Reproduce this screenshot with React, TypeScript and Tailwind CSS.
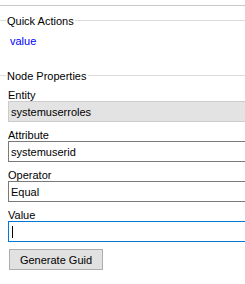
import React from "react";

const font = { fontFamily: '"Liberation Sans", Arial, sans-serif' };

function Legend({ title, top }: { title: string; top: string }) {
  return (
    <div className={`flex items-center h-[14px] ${top}`}>
      <div className="w-[6px] h-px bg-[#dcdcdc]" />
      <span className="px-[1px] text-[11px] leading-[14px] pt-px text-black whitespace-nowrap">{title}</span>
      <div className="flex-1 h-px bg-[#dcdcdc]" />
    </div>
  );
}

function Field({
  label,
  value,
  variant,
}: {
  label: string;
  value?: string;
  variant: "disabled" | "normal" | "focus";
}) {
  const box =
    variant === "disabled"
      ? "bg-[#e3e3e3] border-[#cccccc]"
      : variant === "focus"
      ? "bg-white border-[#0078d7]"
      : "bg-white border-[#7a7a7a]";
  return (
    <div className="flex flex-col">
      <div className="h-[14px] leading-[14px] pt-px text-[11px] text-black pl-[8px]">{label}</div>
      <div className={`ml-[8px] w-[260px] h-[21px] border flex items-center pl-[2px] text-[11px] text-black ${box}`}>
        {variant === "focus" ? (
          <div className="ml-[1px] w-px h-[12px] bg-black" />
        ) : (
          <span className="leading-[14px]">{value}</span>
        )}
      </div>
    </div>
  );
}

export default function App() {
  return (
    <div className="w-[245px] h-[284px] bg-white overflow-hidden pt-[5px]" style={font}>
      <div className="h-px bg-[#c8c8c8]" />
      <Legend title="Quick Actions" top="mt-[7px]" />
      <div className="mt-[6px] pl-[10px] h-[14px] leading-[14px] pt-px text-[11px] text-[#0000ff]">value</div>
      <Legend title="Node Properties" top="mt-[21px]" />
      <div className="mt-[5px] flex flex-col gap-[5px]">
        <Field label="Entity" value="systemuserroles" variant="disabled" />
        <Field label="Attribute" value="systemuserid" variant="normal" />
        <Field label="Operator" value="Equal" variant="normal" />
        <Field label="Value" variant="focus" />
      </div>
      <div className="mt-[7px] pl-[9px]">
        <button className="w-[94px] h-[21px] bg-[#e1e1e1] border border-[#adadad] text-[11px] leading-[14px] text-black flex items-center justify-center">
          Generate Guid
        </button>
      </div>
    </div>
  );
}
